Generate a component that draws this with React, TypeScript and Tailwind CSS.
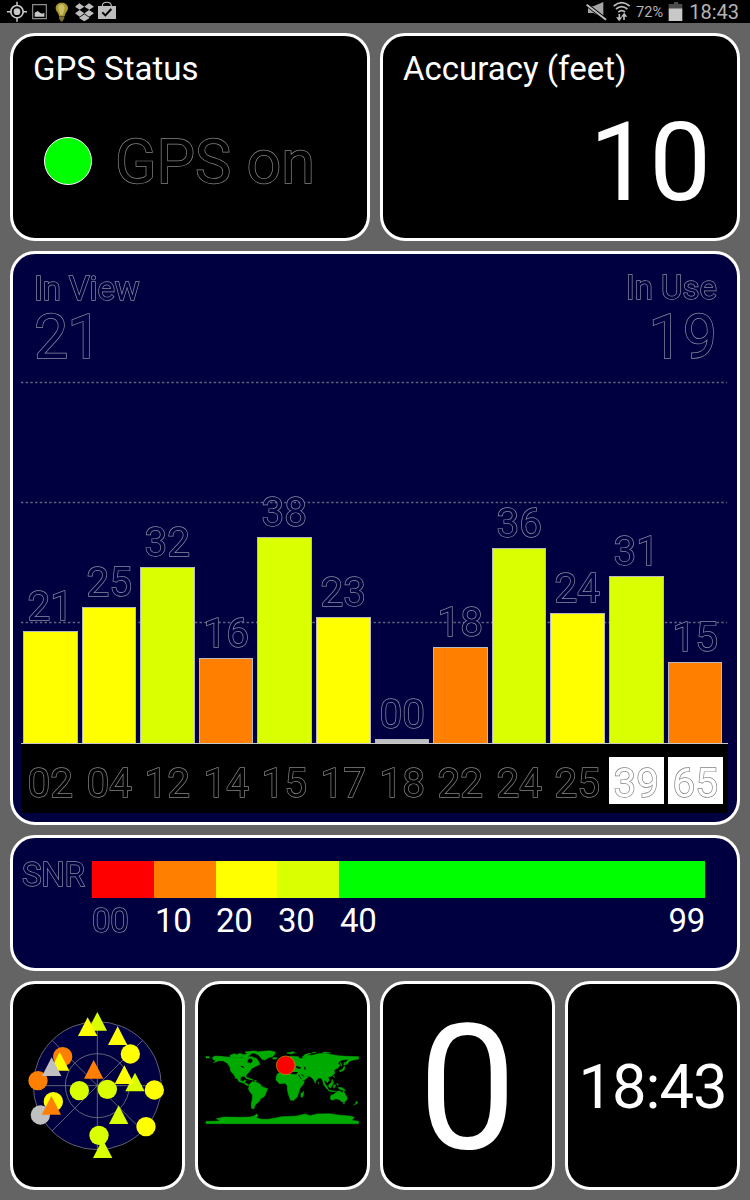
import type { ReactNode } from "react";

const bars = [
  { id: "02", snr: "21", height: 113, color: "bg-[#ffff00]" },
  { id: "04", snr: "25", height: 137, color: "bg-[#ffff00]" },
  { id: "12", snr: "32", height: 177, color: "bg-[#d9ff00]" },
  { id: "14", snr: "16", height: 86, color: "bg-[#ff8000]" },
  { id: "15", snr: "38", height: 207, color: "bg-[#d9ff00]" },
  { id: "17", snr: "23", height: 127, color: "bg-[#ffff00]" },
  { id: "18", snr: "00", height: 5, color: "bg-[#c0c0c0]" },
  { id: "22", snr: "18", height: 97, color: "bg-[#ff8000]" },
  { id: "24", snr: "36", height: 196, color: "bg-[#d9ff00]" },
  { id: "25", snr: "24", height: 131, color: "bg-[#ffff00]" },
  { id: "39", snr: "31", height: 168, color: "bg-[#d9ff00]", boxed: true },
  { id: "65", snr: "15", height: 82, color: "bg-[#ff8000]", boxed: true },
];

// The fill is painted over the stroke, so only the outer hairline of each glyph shows.
const outlineNavy = "will-change-transform text-[#000040] [-webkit-text-stroke:1.4px_#8a8aa2] [paint-order:stroke_fill]";
const outlineBlack = "will-change-transform text-black [-webkit-text-stroke:1.4px_#858585] [paint-order:stroke_fill]";
const outlineWhite = "will-change-transform text-white [-webkit-text-stroke:1.4px_#808080] [paint-order:stroke_fill]";

function Panel({ className, children }: { className: string; children: ReactNode }) {
  return (
    <section className={`rounded-[25px] border-[3px] border-white overflow-hidden ${className}`}>
      {children}
    </section>
  );
}

function StatusBar() {
  return (
    <header className="flex h-[23px] items-start justify-between bg-black pl-[6px] pr-[11px] text-[#b4b4b4]">
      <svg className="h-[23px] w-[110px]" viewBox="18 0 330 69">
        <g fill="none" stroke="#c8c8c8">
          <circle cx="51" cy="35" r="18.5" strokeWidth="5" />
          <path d="M51 5v13M51 52v13M21 35h13M68 35h13" strokeWidth="4.5" />
          <path d="M98 14h41v42h-41z" stroke="#909090" strokeWidth="3.5" />
        </g>
        <circle cx="51" cy="35" r="10" fill="#c8c8c8" />
        <path d="M104 50v-12l9-5 7 5 6 3 7-3v12z" fill="#c8c8c8" />
        <path d="M177 48c-1-9-10-14-10-24 0-10 8-16 18-16s19 6 19 16c0 10-9 15-10 24z" fill="#a9982a" />
        <path d="M180 44c0-9-5-14-5-21 0-7 4-10 9-10 6 0 10 4 10 10 0 8-5 12-5 21z" fill="#c9bf69" />
        <path d="M177 49h16v7l-4 4v4h-8v-4l-4-4z" fill="#7b7030" />
        <path d="M238 10l15 10-14 9-14-9zM267 10l15 10-14 9-15-9zM239 30l14 10-14 10-14-10zM267 30l15 10-15 10-14-10zM238 53l15-10 15 10v2l-15 9-15-9z" fill="#bdbdbd" />
        <path d="M294 18h54v39h-54z" fill="#bdbdbd" />
        <path d="M307 18c0-15 27-15 27 0" fill="none" stroke="#bdbdbd" strokeWidth="3.5" />
        <path d="M307 37l9 9 18-19" fill="none" stroke="#000" strokeWidth="6" />
      </svg>
      <div className="flex items-start">
        <svg className="h-[23px] w-[48px]" viewBox="75 0 144 69">
          <path d="M84 19h16l30-13v47l-30-14H84z" fill="#a5a5a5" />
          <path d="M79 13l60 47" stroke="#000" strokeWidth="11" />
          <path d="M80 14l58 45" stroke="#bdbdbd" strokeWidth="6" />
          <g fill="none" stroke="#bdbdbd" strokeWidth="5">
            <path d="M161 18q24-20 48 0M168 27q17-14 34 0M175 36q10-8 20 0" />
            <path d="M178 42v14M192 60V46" strokeWidth="5" />
          </g>
          <path d="M168 52h19l-9.500 12zM183 50h19l-9.500-12z" fill="#bdbdbd" />
        </svg>
        <span className="w-[35px] pl-[3px] pt-[4px] text-[14.500px] leading-[17px] tracking-[0.100px]">72%</span>
        <svg className="h-[23px] w-[17px]" viewBox="322 0 51 69">
          <path d="M340 6h13v6h12v13h-41V12h16z" fill="#4c4c4c" />
          <path d="M324 25h41v38h-41z" fill="#c8c8c8" />
        </svg>
        <span className="w-[54px] pt-[1px] text-right text-[20px] leading-[22px]">18:43</span>
      </div>
    </header>
  );
}

function Chart() {
  return (
    <div className="relative ml-[8px] mr-[9px] mt-[13px] h-[433px] w-[707px]">
      <svg className="absolute left-0 top-0" width="707" height="362" viewBox="0 0 707 362">
        <path
          d="M0 1.500H706M0 121.500H706M0 241.500H706"
          stroke="#62627f"
          strokeWidth="1.500"
          strokeDasharray="2.400 2.300"
        />
      </svg>
      <div className="relative flex h-[363px] items-end gap-[4px] border-b border-[#c8c8c8] pl-[2px]">
        {bars.map((b) => (
          <div key={b.id} className="w-[54.600px]">
            <div className={`mb-[4px] text-center text-[40.500px] leading-[41px] ${outlineNavy}`}>{b.snr}</div>
            <div className={`border border-b-0 border-[#b9b9c4] ${b.color}`} style={{ height: b.height - 1 }} />
          </div>
        ))}
      </div>
      <div className="flex gap-[4px] bg-black pb-[9px] pl-[2px] pt-[13px]">
        {bars.map((b) => (
          <div
            key={b.id}
            className={`h-[47px] w-[54.600px] pt-[6px] text-center text-[40.500px] leading-[41px] ${b.boxed ? `bg-white ${outlineWhite}` : outlineBlack}`}
          >
            {b.id}
          </div>
        ))}
      </div>
    </div>
  );
}

function SkyView() {
  const circles: [number, number, string][] = [
    [188, 245, "#ff8000"], [391, 237, "#ffff00"], [114, 317, "#ff8000"], [238, 347, "#d9ff00"],
    [322, 343, "#d9ff00"], [463, 345, "#ffff00"], [160, 380, "#ffff00"], [121, 420, "#c0c0c0"],
    [438, 455, "#ffff00"], [297, 481, "#d9ff00"],
  ];
  const triangles: [number, number, string][] = [
    [292, 139, "#d9ff00"], [263, 155, "#ffff00"], [353, 182, "#ffff00"], [179, 259, "#ffff00"],
    [155, 275, "#c0c0c0"], [281, 283, "#ff8000"], [405, 321, "#d9ff00"], [373, 299, "#ffff00"],
    [154, 391, "#ff8000"], [356, 419, "#d9ff00"], [308, 521, "#d9ff00"],
  ];
  return (
    <svg width="169" height="202" viewBox="39 30 507 606">
      <circle cx="292" cy="332" r="192" fill="#000040" />
      <g fill="none" stroke="#73737f" strokeWidth="2.500">
        <circle cx="292" cy="332" r="192" />
        <circle cx="292" cy="332" r="96" />
        <path d="M100 332h384M292 140v384M156 196l272 272M156 468L428 196" />
      </g>
      {circles.map(([x, y, c]) => (
        <circle key={`${x}-${y}`} cx={x} cy={y} r="29" fill={c} />
      ))}
      {triangles.map(([x, y, c]) => (
        <path key={`${x}-${y}`} d={`M${x} ${y - 28}l29 56h-58z`} fill={c} />
      ))}
    </svg>
  );
}

function WorldMap() {
  return (
    <svg width="169" height="202" viewBox="24 -135 507 606">
      <g fill="#00aa00" stroke="#00aa00" strokeWidth="1.500" strokeLinejoin="round">
        <path d="M48 79L58 80 58 84 48 84Z" />
        <path d="M68 82L75 78 90 79 120 82 135 82 150 84 165 84 170 80 178 84 172 92 173 98 182 100 187 96 190 84 198 84 204 92 210 103 200 108 192 112 184 116 180 124 174 130 169 134 168 138 173 147 169 146 165 140 156 139 151 144 152 152 160 154 165 149 168 152 163 158 172 161 176 166 186 155 198 156 210 162 216 170 233 176 228 188 222 200 212 206 206 216 198 222 193 230 192 237 184 234 184 220 187 208 188 196 180 186 175 176 178 168 170 166 160 159 147 155 140 143 138 147 132 134 122 124 120 112 112 100 100 93 88 92 70 98 78 92 68 88Z" />
        <path d="M120 76l12-5 8 3 10-4 10 4 14-3 5 4-8 5 15 0 14 7 5 8-12 2-6-10-10-3-12 2-10-4-10 2-10-3-14 2zM165 66l20-3 16 0-6 6-10 1-4 5-8-2z" />
        <path d="M190 68L215 64 240 62 256 66 254 74 246 80 234 84 224 90 216 88 210 80 204 74Z" />
        <path d="M247 84l9-2 6 2-5 4-8-1zM167 143l12 2 10 5-10-1zM192 151l8 1-4 3z" />
        <path d="M259 138L264 130 275 127 296 126 300 132 322 134 330 147 334 153 343 153 340 162 330 175 326 188 322 200 312 211 302 211 296 196 292 180 292 168 286 160 268 161 258 150Z" />
        <path d="M334 190l7-6-1 12-4 7-4-4z" />
        <path d="M264 122L264 113 272 113 270 104 282 98 286 92 290 84 304 78 325 80 328 86 345 83 350 76 365 76 385 71 402 70 420 73 445 77 470 79 506 80 506 87 490 90 478 94 470 104 466 98 476 88 458 90 448 94 444 100 450 106 444 114 436 118 432 122 434 130 426 138 414 142 418 150 412 158 404 149 403 157 409 169 400 158 396 148 391 144 384 145 378 152 376 160 370 148 362 140 350 138 354 142 346 148 333 154 326 144 320 134 322 127 310 126 304 118 296 117 288 124 276 120 272 125Z" />
        <path d="M290 69l18-4 8 3-14 4zM336 82l10-9 18-4-12 7-8 7zM366 68l9-2 4 2zM397 68l10-2 14 3z" />
        <path d="M448 122l9-4 6-10 2 2-3 11-12 4zM461 105l2-8 5 5-3 3zM451 96l5 12-3-1z" />
        <path d="M430 140l2-4 1 6zM426 148l5 9-3 3-3-6zM384 156l3 4-2 1z" />
        <path d="M400 158l10 10 6 11-6-3-10-13zM416 164l10-8 3 6-7 12-6-4zM430 166l8-2-4 8-3 3zM445 171l13 3 9 8-12-2-8-3zM413 180l18 3 7 2-19-1zM440 184l8-1-4 3zM440 160l6 4-3 2z" />
        <path d="M422 197L434 191 440 185 450 183 458 188 461 182 465 191 471 202 471 209 463 216 455 215 448 209 438 206 426 211 421 207Z" />
        <path d="M459 218l5 0-2 5zM498 214l6 4-6 4-7 4 6-6z" />
        <path d="M48 274L90 273 79 266 102 261 150 262 180 261 192 258 200 252 204 255 199 263 216 268 234 268 256 264 274 260 320 258 345 252 360 257 380 252 420 251 450 256 480 258 493 262 485 271 506 274 506 281 48 281Z" />
      </g>
      <g fill="#000">
        <path d="M310 126l12 0 1 3-7 1zM318 108l12 3 4 4-9 1-7-4zM324 134l3 0 8 13-3-1zM342 110l4 1 1 9-4-2zM331 132l6 2 7 6-5-1z" />
        <path d="M150 108l8 0 5 5-4 0z" />
      </g>
      <circle cx="287" cy="106" r="28" fill="#ff0000" stroke="#c19a15" strokeWidth="2" />
    </svg>
  );
}

function SnrScale() {
  const labels = "pt-[6px] text-[33px] leading-[33px] tracking-[-0.300px] text-white";
  return (
    <Panel className="flex h-[136px] bg-[#000040] pl-[8px]">
      <div className={`w-[71px] pl-px pt-[20px] text-[33px] leading-[33px] tracking-[-0.300px] ${outlineNavy}`}>SNR</div>
      <div className="flex pt-[23px]">
        <div className="w-[62px]">
          <div className="h-[37px] bg-[#ff0000]" />
          <div className={`mt-[6px] text-[33px] leading-[33px] tracking-[-0.300px] ${outlineNavy}`}>00</div>
        </div>
        <div className="w-[62px]">
          <div className="h-[37px] bg-[#ff8000]" />
          <div className={`pl-px ${labels}`}>10</div>
        </div>
        <div className="w-[61px]">
          <div className="h-[37px] bg-[#ffff00]" />
          <div className={labels}>20</div>
        </div>
        <div className="w-[62px]">
          <div className="h-[37px] bg-[#d9ff00]" />
          <div className={`pl-px ${labels}`}>30</div>
        </div>
        <div className="w-[366px]">
          <div className="h-[37px] bg-[#00ff00]" />
          <div className={`flex justify-between ${labels}`}>
            <span className="pl-px">40</span>
            <span>99</span>
          </div>
        </div>
      </div>
    </Panel>
  );
}

export default function App() {
  return (
    <div className="h-[1200px] w-[750px] overflow-hidden bg-[#646464] font-['Roboto',sans-serif] text-white">
      <StatusBar />
      <main className="flex flex-col gap-[10px] px-[10px] pt-[10px]">
        <div className="grid grid-cols-2 gap-[10px]">
          <Panel className="h-[208px] bg-black pl-[20px] pt-[16px]">
            <h2 className="text-[33px] leading-[33px]">GPS Status</h2>
            <div className="flex items-start pl-[11px] pt-[52px]">
              <div className="size-[48px] rounded-full border border-white bg-[#00ff00]" />
              <div className={`-mt-[5px] pl-[23px] text-[61px] leading-[61px] ${outlineBlack}`}>GPS on</div>
            </div>
          </Panel>
          <Panel className="h-[208px] bg-black pl-[20px] pt-[16px]">
            <h2 className="text-[33px] leading-[33px]">Accuracy (feet)</h2>
            <div className="pr-[28px] pt-[23px] text-right text-[110px] leading-[110px] tracking-[-2px]">10</div>
          </Panel>
        </div>
        <Panel className="h-[574px] bg-[#000040]">
          <div className={`flex justify-between px-[20px] pt-[18px] ${outlineNavy}`}>
            <div className="pl-px">
              <div className="text-[33px] leading-[33px] tracking-[-0.200px]">In View</div>
              <div className="pt-[2px] text-[61px] leading-[61px] tracking-[-1px]">21</div>
            </div>
            <div className="text-right">
              <div className="-mt-px text-[33px] leading-[33px]">In Use</div>
              <div className="pt-[3px] text-[61px] leading-[61px]">19</div>
            </div>
          </div>
          <Chart />
        </Panel>
        <SnrScale />
        <div className="grid grid-cols-4 gap-[10px]">
          <Panel className="h-[209px] bg-black pt-[1px]">
            <SkyView />
          </Panel>
          <Panel className="h-[209px] bg-black pt-[1px]">
            <WorldMap />
          </Panel>
          <Panel className="h-[209px] bg-black pt-[17px] text-center text-[175px] leading-[175px]">0</Panel>
          <Panel className="flex h-[209px] justify-center bg-black pt-[72px] text-[61.500px] leading-[62px] tracking-[-1px]">
            18:43
          </Panel>
        </div>
      </main>
    </div>
  );
}
